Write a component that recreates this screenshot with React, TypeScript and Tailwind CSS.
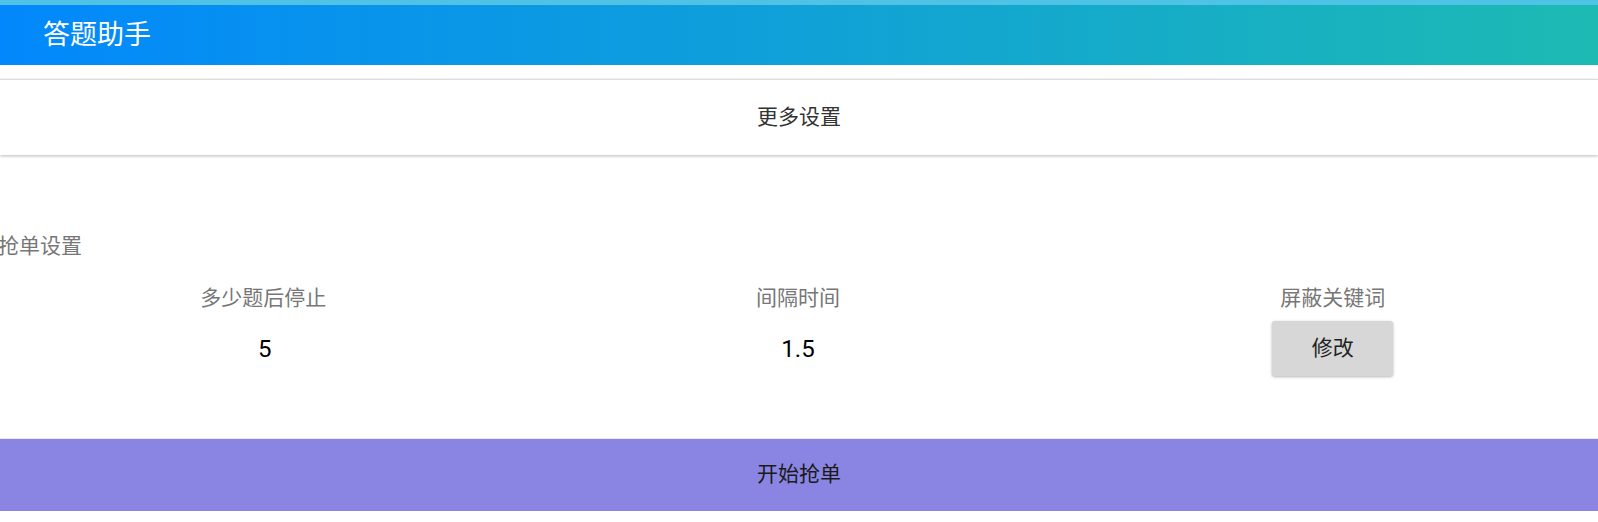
import { ReactNode } from 'react'

const FONT = "font-['Roboto','Noto_Sans_CJK_SC',sans-serif]"

function Column({ label, children }: { label: string; children: ReactNode }) {
  return (
    <div className="flex-1 flex flex-col items-center">
      <p className="h-[30px] leading-[30px] text-[21px] text-[#777777]">{label}</p>
      <div className="mt-[8px] h-[55px] flex items-center justify-center">{children}</div>
    </div>
  )
}

export default function App() {
  return (
    <div className={`${FONT} w-full h-[522px] bg-white overflow-hidden`}>
      {/* status strip + title bar */}
      <div className="h-[5px] bg-[#4fc3e6]" />
      <header className="h-[60px] flex items-center pl-[43px] bg-[linear-gradient(to_right,#0288fc,#1dbab3)]">
        <h1 className="text-[27px] text-white leading-none">答题助手</h1>
      </header>

      {/* more settings */}
      <button className="mt-[14px] w-full h-[76px] flex items-center justify-center bg-white border-t border-[#dddddd] shadow-[0_1px_3px_rgba(0,0,0,0.28)] text-[21px] text-[#333333]">
        更多设置
      </button>

      {/* grab settings */}
      <section className="-ml-[4px] w-[1604px]">
        <p className="mt-[76px] pl-[2px] h-[30px] leading-[30px] text-[21px] text-[#777777]">抢单设置</p>
        <div className="mt-[22px] flex">
          <Column label="多少题后停止">
            <span className="pl-[3px] text-[24px] text-black">5</span>
          </Column>
          <Column label="间隔时间">
            <span className="text-[24px] text-black">1.5</span>
          </Column>
          <Column label="屏蔽关键词">
            <button className="w-[121px] h-[55px] rounded-[3px] bg-[#d6d7d6] shadow-[0_1px_3px_rgba(0,0,0,0.3)] text-[21px] text-[#222222]">
              修改
            </button>
          </Column>
        </div>
      </section>

      {/* start */}
      <button className="mt-[62px] w-full h-[73px] flex items-center justify-center bg-[#8a84e2] border-t border-[#e8e8e8] text-[21px] text-[#1a1a1a]">
        开始抢单
      </button>
    </div>
  )
}
